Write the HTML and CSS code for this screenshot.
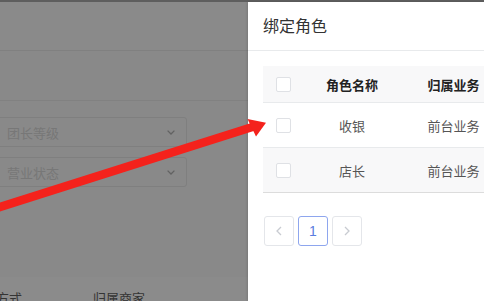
FILE: index.html
```html
<!DOCTYPE html>
<html lang="zh">
<head>
<meta charset="utf-8">
<title>绑定角色</title>
<link rel="stylesheet" href="styles.css">
</head>
<body>
<div class="screen">
  <div class="topstrip"></div>
  <div class="main">
    <div class="backdrop">
      <div class="bd-head"></div>
      <div class="bd-sub"></div>
      <div class="bd-filters">
        <div class="sel"><span class="sel-text">团长等级</span><svg class="chev" viewBox="0 0 8 5" width="8" height="5"><polyline points="0.6,0.6 4,4 7.4,0.6"/></svg></div>
        <div class="sel"><span class="sel-text">营业状态</span><svg class="chev" viewBox="0 0 8 5" width="8" height="5"><polyline points="0.6,0.6 4,4 7.4,0.6"/></svg></div>
      </div>
      <div class="bd-table">
        <span class="bd-col1">方式</span>
        <span class="bd-col2">归属商家</span>
      </div>
    </div>
    <div class="drawer">
      <div class="drawer-head">绑定角色</div>
      <div class="drawer-body">
        <div class="tbl">
          <div class="tr th">
            <div class="cell"><span class="cb"></span></div>
            <div class="cell">角色名称</div>
            <div class="cell">归属业务</div>
          </div>
          <div class="tr">
            <div class="cell"><span class="cb"></span></div>
            <div class="cell">收银</div>
            <div class="cell">前台业务</div>
          </div>
          <div class="tr alt last">
            <div class="cell"><span class="cb"></span></div>
            <div class="cell">店长</div>
            <div class="cell">前台业务</div>
          </div>
        </div>
        <div class="pager">
          <div class="pg pg-dis"><svg viewBox="0 0 6 10" width="6" height="10"><polyline points="5,1 1,5 5,9"/></svg></div>
          <div class="pg pg-on">1</div>
          <div class="pg pg-dis"><svg viewBox="0 0 6 10" width="6" height="10"><polyline points="1,1 5,5 1,9"/></svg></div>
        </div>
      </div>
    </div>
  </div>
  <svg class="arrow" viewBox="0 0 484 301" width="484" height="301">
    <line x1="-4" y1="208.3" x2="254" y2="126.5"/>
    <polygon points="266,122.8 247.5,119 256,136.5"/>
  </svg>
</div>
</body>
</html>
```

FILE: styles.css
```css
* { box-sizing: border-box; }
html, body { margin: 0; padding: 0; }
body {
  width: 484px;
  height: 301px;
  overflow: hidden;
  font-family: "Noto Sans CJK SC", "Noto Sans", sans-serif;
  background: #fff;
}
.screen {
  position: relative;
  width: 484px;
  height: 301px;
  overflow: hidden;
  display: flex;
  flex-direction: column;
}
.topstrip {
  height: 2px;
  flex: none;
  background: #5e5e5e;
}
.main {
  flex: 1;
  display: flex;
  min-height: 0;
}
.backdrop {
  width: 248px;
  flex: none;
  background: #898989;
  display: flex;
  flex-direction: column;
  overflow: hidden;
}
.bd-head {
  height: 49px;
  flex: none;
  border-bottom: 1px solid #808080;
  background: #8a8a8a;
}
.bd-sub {
  height: 50px;
  flex: none;
  border-bottom: 1px solid #818181;
}
.bd-filters {
  padding-top: 16px;
  display: flex;
  flex-direction: column;
  gap: 10px;
  flex: none;
}
.sel {
  margin-left: -12px;
  width: 199px;
  height: 30px;
  border: 1px solid #7f7f7f;
  border-radius: 3px;
  display: flex;
  align-items: center;
  justify-content: space-between;
  padding: 0 11px 0 18px;
}
.sel-text {
  font-size: 13px;
  color: #777;
  line-height: 1;
}
.chev polyline {
  fill: none;
  stroke: #626262;
  stroke-width: 1.3;
}
.bd-table {
  margin-top: 90px;
  flex: 1;
  background: #8b8b8b;
  padding-top: 11px;
  display: flex;
  font-size: 13px;
  line-height: 20px;
  color: #343434;
}
.bd-col1 {
  margin-left: -4px;
  width: 97px;
  flex: none;
}
.bd-col2 { flex: none; }

.drawer {
  flex: 1;
  background: #fff;
  display: flex;
  flex-direction: column;
  box-shadow: -1px 0 2px rgba(0,0,0,0.12);
  overflow: hidden;
}
.drawer-head {
  height: 49px;
  flex: none;
  border-bottom: 1px solid #e8eaec;
  padding: 0 0 3px 15px;
  display: flex;
  align-items: center;
  font-size: 16px;
  color: #333;
}
.drawer-body {
  padding: 15px 0 0 15px;
}
.tbl {
  width: 243px;
}
.tr {
  display: grid;
  grid-template-columns: 40px 98px 105px;
  height: 45px;
  border-bottom: 1px solid #e8eaec;
  font-size: 13px;
  color: #555;
}
.tr.th {
  height: 37px;
  background: #f8f8f9;
  font-weight: bold;
  color: #222;
}
.tr.alt { background: #f8f8f9; }
.tr.last { border-bottom-color: #dcdcdc; }
.cell {
  display: flex;
  align-items: center;
  justify-content: center;
  white-space: nowrap;
}
.cb {
  width: 15px;
  height: 15px;
  border: 1px solid #dfe1e5;
  border-radius: 2px;
  background: #fff;
}
.pager {
  margin-top: 23px;
  display: flex;
  gap: 4px;
  padding-left: 1px;
}
.pg {
  width: 30px;
  height: 30px;
  border: 1px solid #e4e6ea;
  border-radius: 3px;
  display: flex;
  align-items: center;
  justify-content: center;
  background: #fff;
}
.pg svg polyline {
  fill: none;
  stroke: #c8cbd1;
  stroke-width: 1.3;
}
.pg-on {
  border-color: #8ea6ee;
  color: #5a7de0;
  font-family: "Liberation Sans", Arial, sans-serif;
  font-size: 14px;
}
.arrow {
  position: absolute;
  left: 0;
  top: 0;
  pointer-events: none;
}
.arrow line {
  stroke: #f4221c;
  stroke-width: 8.5;
}
.arrow polygon {
  fill: #f4221c;
}
```
